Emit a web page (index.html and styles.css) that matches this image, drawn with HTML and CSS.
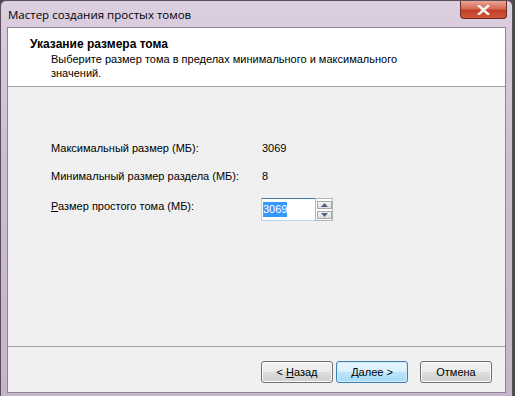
FILE: index.html
```html
<!DOCTYPE html>
<html lang="ru">
<head>
    <meta charset="UTF-8">
    <title>Мастер создания простых томов</title>
    <link rel="stylesheet" href="styles.css">
</head>
<body>
    <div class="window">
        <div class="titlebar">
            <span class="title">Мастер создания простых томов</span>
            <div class="close-btn">
                <svg width="13" height="10" viewBox="0 0 13 10">
                    <path d="M2 1 L11 9 M11 1 L2 9" stroke="#f4f0f0" stroke-width="2.6" stroke-linecap="square"/>
                </svg>
            </div>
        </div>

        <div class="client">
            <div class="header">
                <h2>Указание размера тома</h2>
                <p>Выберите размер тома в пределах минимального и максимального значений.</p>
            </div>

            <div class="body">
                <div class="row">
                    <span class="label">Максимальный размер (МБ):</span>
                    <span class="value">3069</span>
                </div>
                <div class="row">
                    <span class="label">Минимальный размер раздела (МБ):</span>
                    <span class="value">8</span>
                </div>
                <div class="row row-input">
                    <span class="label"><u>Р</u>азмер простого тома (МБ):</span>
                    <div class="spin">
                        <div class="spin-input"><span class="selected">3069</span></div>
                        <div class="spin-buttons">
                            <div class="spin-btn">
                                <svg width="7" height="4" viewBox="0 0 7 4"><path d="M0 4 L3.5 0 L7 4 Z" fill="#4d6185"/></svg>
                            </div>
                            <div class="spin-btn">
                                <svg width="7" height="4" viewBox="0 0 7 4"><path d="M0 0 L3.5 4 L7 0 Z" fill="#4d6185"/></svg>
                            </div>
                        </div>
                    </div>
                </div>
            </div>

            <div class="footer">
                <button class="btn">&lt; <u>Н</u>азад</button>
                <button class="btn btn-default"><u>Д</u>алее &gt;</button>
                <button class="btn btn-cancel">Отмена</button>
            </div>
        </div>
    </div>
</body>
</html>
```

FILE: styles.css
```css
body {
    margin: 0;
    background-color: #4a4a4a;
    font-family: "Liberation Sans", Arial, sans-serif;
    font-size: 11px;
    color: #000;
}

.window {
    width: 499px;
    height: 392px;
    border: 1px solid #5a4e5c;
    border-radius: 6px 6px 0 0;
    background: linear-gradient(to bottom, #dccfe0 0%, #cdbdd2 40%, #c6b4ca 100%);
    padding: 0 6px 6px 6px;
    display: flex;
    flex-direction: column;
}

.titlebar {
    height: 26px;
    display: flex;
    align-items: flex-start;
    justify-content: space-between;
}

.title {
    font-family: "Open Sans", "Liberation Sans", sans-serif;
    font-size: 11.5px;
    color: #000;
    margin-top: 6px;
    margin-left: 1px;
}

.close-btn {
    width: 45px;
    height: 17px;
    margin-right: -1px;
    border: 1px solid #6b2a22;
    border-top: none;
    border-radius: 0 0 4px 4px;
    background: linear-gradient(to bottom, #e9a595 0%, #d66a55 45%, #c23d26 55%, #d0573d 100%);
    display: flex;
    align-items: center;
    justify-content: center;
}

.client {
    flex: 1;
    border: 1px solid #8d8593;
    background-color: #f0f0f0;
    display: flex;
    flex-direction: column;
}

.header {
    height: 59px;
    background-color: #fff;
    border-bottom: 1px solid #a0a0a0;
    padding: 9px 0 0 22px;
    box-sizing: border-box;
}

.header h2 {
    margin: 0;
    font-size: 12px;
    line-height: 14px;
    font-weight: bold;
}

.header p {
    margin: 1px 0 0 21px;
    width: 360px;
    line-height: 14px;
}

.body {
    flex: 1;
    padding: 54px 0 0 43px;
    border-bottom: 1px solid #a0a0a0;
    display: flex;
    flex-direction: column;
    gap: 14px;
}

.row {
    display: flex;
    align-items: center;
    line-height: 14px;
    height: 14px;
}

.row-input {
    align-items: flex-start;
    margin-top: 2px;
}

.label {
    width: 211px;
}

.spin {
    display: flex;
    margin-top: -1px;
    margin-left: -1px;
}

.spin-input {
    width: 54px;
    height: 23px;
    border: 1px solid #b8d0e8;
    border-top-color: #3d7bad;
    border-right: none;
    background-color: #fff;
    box-sizing: border-box;
    padding: 3px 0 0 1px;
}

.selected {
    background-color: #3399ff;
    color: #fff;
    padding: 1px 0 2px 0;
}

.spin-buttons {
    display: flex;
    flex-direction: column;
    justify-content: center;
    gap: 2px;
    width: 18px;
    height: 23px;
    border: 1px solid #b5b5b5;
    background-color: #fff;
    box-sizing: border-box;
    padding-left: 1px;
}

.spin-btn {
    width: 15px;
    height: 8px;
    border: 1px solid #a7a7a7;
    background: linear-gradient(to bottom, #f5f5f5, #dedede);
    box-sizing: border-box;
    display: flex;
    align-items: center;
    justify-content: center;
}

.footer {
    height: 45px;
    display: flex;
    align-items: flex-start;
    padding: 14px 0 0 253px;
    box-sizing: border-box;
}

.btn {
    width: 72px;
    height: 22px;
    font-family: "Liberation Sans", Arial, sans-serif;
    font-size: 11px;
    color: #000;
    border: 1px solid #707070;
    border-radius: 3px;
    background: linear-gradient(to bottom, #f2f2f2 0%, #ebebeb 50%, #dddddd 50%, #cfcfcf 100%);
    box-shadow: inset 0 0 0 1px #fcfcfc;
    padding: 0;
    margin-right: 3px;
}

.btn-default {
    border-color: #3c7fb1;
    background: linear-gradient(to bottom, #eaf6fd 0%, #d9f0fc 50%, #bee6fd 50%, #a7d9f5 100%);
    box-shadow: inset 0 0 0 1px #d4ecfa;
}

.btn-cancel {
    margin-left: 9px;
}
```
